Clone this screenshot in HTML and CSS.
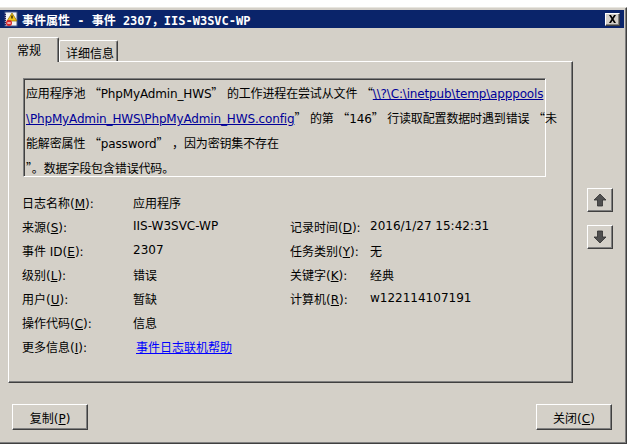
FILE: index.html
```html
<!DOCTYPE html>
<html lang="zh-CN">
<head>
    <meta charset="UTF-8">
    <title>事件属性</title>
    <link rel="stylesheet" href="styles.css">
</head>
<body>
    <div class="dialog">
        <div class="titlebar">
            <svg class="ticon" width="16" height="16" viewBox="0 0 16 16">
                <rect x="2" y="1" width="12" height="14" fill="#f4f4f4" stroke="#4a5a8a"/>
                <line x1="2" y1="3" x2="2" y2="14" stroke="#202060" stroke-width="2" stroke-dasharray="1 1"/>
                <polygon points="9,2 14,10 4,10" fill="#f2c418" stroke="#8a6a00" stroke-width="0.7"/>
                <rect x="8.4" y="4.5" width="1.2" height="3" fill="#000"/>
                <circle cx="6" cy="12" r="3" fill="#d8262a"/>
                <rect x="4.3" y="11.4" width="3.4" height="1.2" fill="#fff"/>
            </svg>
            <span class="ttext">事件属性 - 事件 2307，IIS-W3SVC-WP</span>
            <span class="close">
                <svg width="9" height="8" viewBox="0 0 9 8"><path d="M1 0h2l1.5 2.5L6 0h2L5.5 4 8 8H6L4.5 5.5 3 8H1l2.5-4z" fill="#000"/></svg>
            </span>
        </div>

        <div class="content">
            <div class="main">
                <div class="tabs">
                    <div class="tab active">常规</div>
                    <div class="tab">详细信息</div>
                </div>
                <div class="panel">
                    <div class="message">
                        应用程序池 <span class="cq">“</span>PhpMyAdmin_HWS<span class="cq">”</span> 的工作进程在尝试从文件 <span class="cq">“</span><a class="msg-link">\\?\C:\inetpub\temp\apppools<br>\PhpMyAdmin_HWS\PhpMyAdmin_HWS.config</a><span class="cq">”</span> 的第 <span class="cq">“</span>146<span class="cq">”</span> 行读取配置数据时遇到错误 <span class="cq">“</span>未<br>
                        能解密属性 <span class="cq">“</span>password<span class="cq">”</span> <span class="cq">，</span>因为密钥集不存在<br>
                        <span class="cq">”</span><span class="cq">。</span>数据字段包含错误代码。
                    </div>
                    <div class="fields">
                        <div>日志名称(<u>M</u>):</div><div class="wide">应用程序</div>
                        <div>来源(<u>S</u>):</div><div>IIS-W3SVC-WP</div><div>记录时间(<u>D</u>):</div><div>2016/1/27 15:42:31</div>
                        <div>事件 ID(<u>E</u>):</div><div>2307</div><div>任务类别(<u>Y</u>):</div><div>无</div>
                        <div>级别(<u>L</u>):</div><div>错误</div><div>关键字(<u>K</u>):</div><div>经典</div>
                        <div>用户(<u>U</u>):</div><div>暂缺</div><div>计算机(<u>R</u>):</div><div>w122114107191</div>
                        <div>操作代码(<u>C</u>):</div><div class="wide">信息</div>
                        <div>更多信息(<u>I</u>):</div><div class="wide"><a class="help-link">事件日志联机帮助</a></div>
                    </div>
                </div>
            </div>
            <div class="side">
                <button class="arrow">
                    <svg width="14" height="14" viewBox="0 0 14 14"><polygon points="7,1 13,7 9.5,7 9.5,13 4.5,13 4.5,7 1,7" fill="#505050" stroke="#303030" stroke-width="0.8"/></svg>
                </button>
                <button class="arrow">
                    <svg width="14" height="14" viewBox="0 0 14 14"><polygon points="7,13 13,7 9.5,7 9.5,1 4.5,1 4.5,7 1,7" fill="#505050" stroke="#303030" stroke-width="0.8"/></svg>
                </button>
            </div>
        </div>

        <div class="footer">
            <button class="btn">复制(<u>P</u>)</button>
            <button class="btn">关闭(<u>C</u>)</button>
        </div>
    </div>
</body>
</html>
```

FILE: styles.css
```css
body {
    margin: 0;
    width: 629px;
    height: 447px;
    overflow: hidden;
    background: #fff;
    font-family: "DejaVu Sans", "Noto Sans CJK SC", sans-serif;
    font-size: 12px;
    color: #000;
}
.dialog {
    box-sizing: border-box;
    width: 627px;
    height: 437px;
    margin-top: 7px;
    background: #d4d0c8;
    border-top: 1px solid #e8e6e0;
    border-right: 1px solid #404040;
    border-bottom: 1px solid #404040;
    box-shadow: inset -1px -1px #808080;
    padding: 2px 2px 0 0;
    display: flex;
    flex-direction: column;
}
.titlebar {
    height: 18px;
    background: #0a246a;
    display: flex;
    align-items: center;
    padding: 0 4px 0 3px;
}
.ttext {
    margin-left: 3px;
    color: #fff;
    font-family: "DejaVu Sans Mono", "Noto Sans CJK SC", monospace;
    font-weight: bold;
    font-size: 12px;
    white-space: nowrap;
}
.close {
    margin-left: auto;
    box-sizing: border-box;
    width: 15px;
    height: 13px;
    background: #d4d0c8;
    border-top: 1px solid #fff;
    border-left: 1px solid #fff;
    border-right: 1px solid #404040;
    border-bottom: 1px solid #404040;
    box-shadow: inset -1px -1px #808080;
    display: flex;
    align-items: center;
    justify-content: center;
}
.content {
    display: flex;
    padding: 9px 0 0 8px;
}
.main {
    width: 565px;
}
.tabs {
    display: flex;
    align-items: flex-end;
    height: 24px;
    position: relative;
    z-index: 1;
}
.tab {
    box-sizing: border-box;
    height: 21px;
    width: 59px;
    padding: 3px 0 0 6px;
    border-top: 1px solid #fff;
    border-left: 1px solid #fff;
    border-right: 1px solid #404040;
    box-shadow: inset -1px 0 #808080;
    border-radius: 2px 2px 0 0;
    background: #d4d0c8;
}
.tab.active {
    height: 25px;
    width: 51px;
    padding: 3px 0 0 8px;
    margin-bottom: -1px;
}
.panel {
    box-sizing: border-box;
    height: 322px;
    border-top: 1px solid #fff;
    border-left: 1px solid #fff;
    border-right: 1px solid #404040;
    border-bottom: 1px solid #404040;
    box-shadow: inset -1px -1px #808080;
    padding: 16px 0 0 14px;
}
.message {
    box-sizing: border-box;
    width: 523px;
    height: 99px;
    border-top: 1px solid #808080;
    border-left: 1px solid #808080;
    border-right: 1px solid #fff;
    border-bottom: 1px solid #fff;
    box-shadow: inset 1px 1px #404040;
    padding: 2px 0 0 2px;
    line-height: 23px;
    letter-spacing: -0.15px;
    white-space: nowrap;
}
.cq {
    font-family: "Noto Sans CJK SC", sans-serif;
}
.msg-link {
    color: #000099;
    text-decoration: underline;
}
.fields {
    display: grid;
    grid-template-columns: 111px 157px 80px auto;
    grid-auto-rows: 24px;
    align-items: center;
    margin: 13px 0 0 -1px;
    white-space: nowrap;
}
.fields .wide {
    grid-column: 2 / span 3;
}
.help-link {
    color: #0000ff;
    text-decoration: underline;
    margin-left: 3px;
}
.side {
    display: flex;
    flex-direction: column;
    gap: 13px;
    padding: 151px 0 0 14px;
}
.arrow, .btn {
    box-sizing: border-box;
    background: #d4d0c8;
    border-top: 1px solid #fff;
    border-left: 1px solid #fff;
    border-right: 1px solid #404040;
    border-bottom: 1px solid #404040;
    box-shadow: inset -1px -1px #808080;
    border-radius: 0;
    padding: 0;
    font: inherit;
    color: #000;
}
.arrow {
    width: 26px;
    height: 24px;
    display: flex;
    align-items: center;
    justify-content: center;
}
.footer {
    display: flex;
    justify-content: space-between;
    padding: 21px 12px 0 12px;
}
.btn {
    width: 76px;
    height: 26px;
}
```
